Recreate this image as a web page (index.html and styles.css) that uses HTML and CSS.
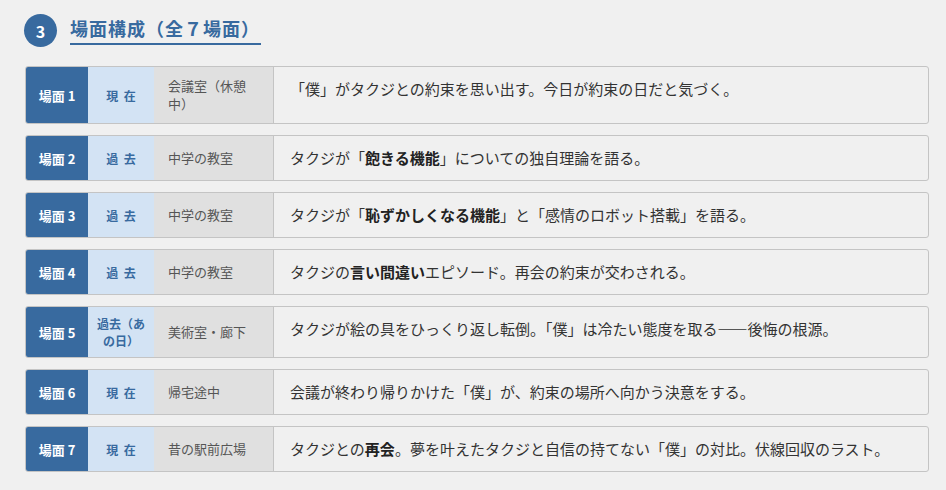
FILE: index.html
```html
<!DOCTYPE html>
<html lang="ja">
<head>
<meta charset="utf-8">
<title>場面構成</title>
<link rel="stylesheet" href="styles.css">
</head>
<body>
<div class="page">
  <div class="section-head">
    <span class="num">3</span>
    <h2 class="title">場面構成（全７場面）</h2>
  </div>
  <div class="scenes">
    <div class="scene">
      <div class="label">場面 1</div>
      <div class="time">現 在</div>
      <div class="place">会議室（休憩中）</div>
      <div class="desc">「僕」がタクジとの約束を思い出す。今日が約束の日だと気づく。</div>
    </div>
    <div class="scene">
      <div class="label">場面 2</div>
      <div class="time">過 去</div>
      <div class="place">中学の教室</div>
      <div class="desc">タクジが「<b>飽きる機能</b>」についての独自理論を語る。</div>
    </div>
    <div class="scene">
      <div class="label">場面 3</div>
      <div class="time">過 去</div>
      <div class="place">中学の教室</div>
      <div class="desc">タクジが「<b>恥ずかしくなる機能</b>」と「感情のロボット搭載」を語る。</div>
    </div>
    <div class="scene">
      <div class="label">場面 4</div>
      <div class="time">過 去</div>
      <div class="place">中学の教室</div>
      <div class="desc">タクジの<b>言い間違い</b>エピソード。再会の約束が交わされる。</div>
    </div>
    <div class="scene">
      <div class="label">場面 5</div>
      <div class="time">過去（あの日）</div>
      <div class="place">美術室・廊下</div>
      <div class="desc">タクジが絵の具をひっくり返し転倒。「僕」は冷たい態度を取る——後悔の根源。</div>
    </div>
    <div class="scene">
      <div class="label">場面 6</div>
      <div class="time">現 在</div>
      <div class="place">帰宅途中</div>
      <div class="desc">会議が終わり帰りかけた「僕」が、約束の場所へ向かう決意をする。</div>
    </div>
    <div class="scene">
      <div class="label">場面 7</div>
      <div class="time">現 在</div>
      <div class="place">昔の駅前広場</div>
      <div class="desc">タクジとの<b>再会</b>。夢を叶えたタクジと自信の持てない「僕」の対比。伏線回収のラスト。</div>
    </div>
  </div>
</div>
</body>
</html>
```

FILE: styles.css
```css
* { box-sizing: border-box; }

html, body {
  margin: 0;
  padding: 0;
  background: #f0f0f0;
}

body {
  font-family: "Noto Sans CJK JP", "Noto Sans", sans-serif;
  color: #333;
}

.page {
  padding: 14px 17px 0 24px;
}

.section-head {
  display: flex;
  align-items: center;
  gap: 13px;
  margin-bottom: 19px;
}

.num {
  width: 33px;
  height: 33px;
  border-radius: 50%;
  background: #386a9f;
  color: #fff;
  font-weight: 700;
  font-size: 16px;
  display: flex;
  align-items: center;
  justify-content: center;
}

.title {
  margin: 0;
  font-size: 18px;
  font-weight: 700;
  line-height: 24px;
  letter-spacing: 1px;
  color: #386a9f;
  padding: 0 1px 3px 0;
  border-bottom: 2px solid #386a9f;
}

.scenes {
  display: flex;
  flex-direction: column;
  gap: 11px;
  margin-left: 1px;
}

.scene {
  display: grid;
  grid-template-columns: 62px 66px 120px 1fr;
  border: 1px solid #c4c4c4;
  border-radius: 3px;
  overflow: hidden;
  background: #f0f0f0;
}

.label {
  background: #386a9f;
  color: #fff;
  font-weight: 700;
  font-size: 13px;
  display: flex;
  align-items: center;
  justify-content: center;
  white-space: nowrap;
}

.time {
  background: #d3e3f4;
  color: #386a9f;
  font-weight: 700;
  font-size: 12px;
  line-height: 17px;
  word-spacing: 3px;
  padding: 8px 6px;
  display: flex;
  align-items: center;
  justify-content: center;
  text-align: center;
}

.place {
  background: #e0e0e0;
  color: #555;
  font-size: 13px;
  line-height: 18px;
  padding: 10px 14px;
  border-right: 1px solid #c4c4c4;
  display: flex;
  align-items: center;
}

.desc {
  font-size: 15px;
  line-height: 22px;
  padding: 11px 16px;
  color: #333;
}

.desc b {
  font-weight: 700;
  color: #222;
}
```
